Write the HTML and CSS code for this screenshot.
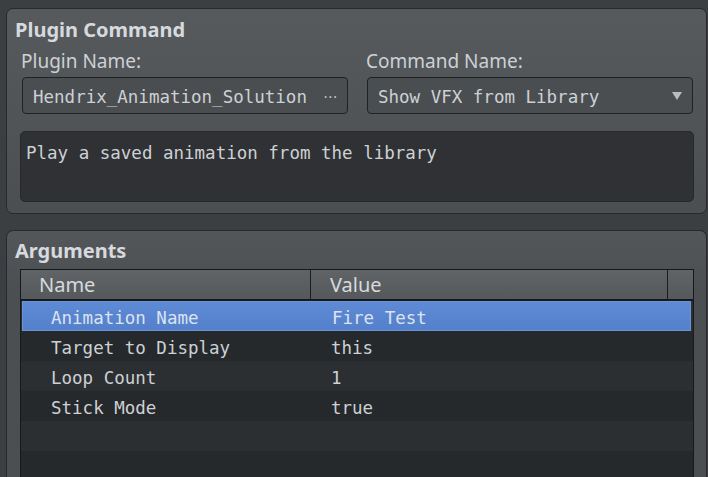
FILE: index.html
```html
<!DOCTYPE html>
<html lang="en">
<head>
  <meta charset="UTF-8" />
  <title>Plugin Command</title>
  <link rel="stylesheet" href="styles.css">
</head>
<body>
  <div class="group group-command">
    <div class="group-title">Plugin Command</div>
    <div class="fields">
      <div class="field">
        <label class="field-label">Plugin Name:</label>
        <div class="input">
          <span class="input-text">Hendrix_Animation_Solution</span>
          <span class="more">···</span>
        </div>
      </div>
      <div class="field">
        <label class="field-label">Command Name:</label>
        <div class="input">
          <span class="input-text">Show VFX from Library</span>
          <span class="arrow"></span>
        </div>
      </div>
    </div>
    <div class="desc">Play a saved animation from the library</div>
  </div>

  <div class="group group-args">
    <div class="group-title">Arguments</div>
    <div class="table">
      <div class="thead">
        <div class="th th-name">Name</div>
        <div class="th th-value">Value</div>
        <div class="th th-corner"></div>
      </div>
      <div class="row selected"><div class="cell-name">Animation Name</div><div class="cell-value">Fire Test</div></div>
      <div class="row"><div class="cell-name">Target to Display</div><div class="cell-value">this</div></div>
      <div class="row"><div class="cell-name">Loop Count</div><div class="cell-value">1</div></div>
      <div class="row"><div class="cell-name">Stick Mode</div><div class="cell-value">true</div></div>
      <div class="row"></div>
      <div class="row"></div>
    </div>
  </div>
</body>
</html>
```

FILE: styles.css
```css
:root {
  --bg: #3c3f42;
  --text: #cdd1d5;
  --border: #27292b;
  --mono: 'DejaVu Sans Mono', monospace;
  --sans: 'Noto Sans', sans-serif;
}

html, body {
  height: 100%;
}

body {
  margin: 0;
  padding: 8px 1px 0 6px;
  background: var(--bg);
  color: var(--text);
  font-family: var(--sans);
  box-sizing: border-box;
  overflow: hidden;
  display: flex;
  flex-direction: column;
}

.group {
  border: 1px solid var(--border);
  border-radius: 7px;
  background: linear-gradient(#565a5d, #4c4f52);
}

.group-command {
  height: 206px;
  flex-shrink: 0;
  box-sizing: border-box;
  padding: 9px 13px 0 14px;
}

/* second box runs on below the window */
.group-args {
  flex: 1;
  min-height: 0;
  margin-top: 16px;
  padding: 8px 13px 0 14px;
  border-bottom: none;
  border-radius: 7px 7px 0 0;
  background: linear-gradient(#54575a, #4c4f52 60px);
  display: flex;
  flex-direction: column;
}

.group-title {
  margin-left: -6px;
  font-weight: bold;
  font-size: 20px;
  line-height: 24px;
  color: #d6dade;
}

/* plugin / command pickers */
.fields {
  display: flex;
  gap: 18px;
  margin-top: 8px;
}

.field {
  flex: 1;
  display: flex;
  flex-direction: column;
}

.field-label {
  font-size: 19px;
  line-height: 22px;
  margin-bottom: 5px;
}

.input {
  margin-left: 1px;
  height: 37px;
  box-sizing: border-box;
  border: 1px solid #1f2123;
  border-radius: 4px;
  background: #4b4e51;
  display: flex;
  align-items: center;
  padding: 2px 9px 0 10px;
  font-family: var(--mono);
  font-size: 17.5px;
}

.input-text {
  flex: 1;
}

.more {
  font-family: var(--sans);
  font-size: 14px;
  letter-spacing: 1px;
  color: #c4c8cc;
}

.arrow {
  width: 0;
  height: 0;
  border-left: 5px solid transparent;
  border-right: 5px solid transparent;
  border-top: 8px solid #b9bdc1;
  margin: 0 1px 2px 0;
}

.desc {
  margin: 17px -1px 0 -1px;
  height: 71px;
  box-sizing: border-box;
  border: 1px solid #26282a;
  border-radius: 5px;
  background: #2f3134;
  padding: 10px 5px;
  font-family: var(--mono);
  font-size: 17.5px;
  line-height: 22px;
}

/* argument table */
.table {
  flex: 1;
  min-height: 0;
  overflow: hidden;
  margin: 6px 0 0 -1px;
  width: 672px;
  border: 1px solid #17181a;
  border-bottom: none;
  background: #2c2f32;
}

.thead {
  display: grid;
  grid-template-columns: 290px 357px 1fr;
  height: 29px;
  border-bottom: 2px solid #17181a;
  background: linear-gradient(#616467, #56595c);
}

.th {
  font-size: 20px;
  line-height: 29px;
  color: #d6dade;
}

.th-name {
  padding-left: 18px;
  border-right: 1px solid #1b1c1e;
}

.th-value {
  padding-left: 19px;
  border-right: 1px solid #1b1c1e;
}

.row {
  display: grid;
  grid-template-columns: 290px 1fr;
  height: 30px;
  box-sizing: border-box;
  padding-top: 4px;
  font-family: var(--mono);
  font-size: 17.5px;
  line-height: 26px;
}

.row:nth-child(odd) {
  background: #26292c;
}

.row.selected {
  margin: 0 2px 0 1px;
  background: linear-gradient(#5f8ad5, #5480cb);
  box-shadow: inset 0 0 0 1px #6b93d8;
  color: #dbe3ef;
}

.cell-name {
  padding-left: 30px;
}

.row.selected .cell-name {
  padding-left: 29px;
}

.cell-value {
  padding-left: 20px;
}
```
